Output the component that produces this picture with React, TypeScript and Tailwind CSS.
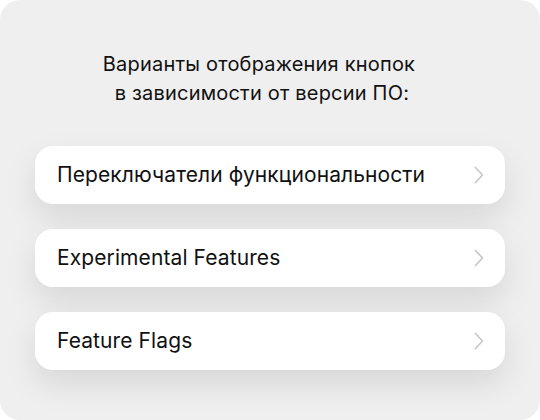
import React from 'react'

const items = ['Переключатели функциональности', 'Experimental Features', 'Feature Flags']

const Chevron = () => (
    <svg width="12" height="18" viewBox="0 0 12 18" fill="none" className="shrink-0">
        <path d="M2.5 1.5L9.5 9L2.5 16.5" stroke="#c9c9c9" strokeWidth="1.8" strokeLinecap="round" strokeLinejoin="round" />
    </svg>
)

const App = () => {
    return (
        <div className="w-[540px] h-[420px] bg-white" style={{ fontFamily: 'Inter, "Noto Sans", sans-serif' }}>
            <div className="w-full h-full rounded-[20px] bg-[#efefef] px-[35px] pt-[50px] flex flex-col">
                {/* Title */}
                <p className="pr-[22px] text-center text-[20px] leading-[29px] text-[#111] whitespace-pre tracking-[0.2px]">
                    {'Варианты отображения кнопок\n в зависимости от версии ПО:'}
                </p>

                {/* Buttons */}
                <div className="mt-[38px] flex flex-col gap-[25px]">
                    {items.map((label) => (
                        <div
                            key={label}
                            className="h-[58px] w-[470px] rounded-[18px] bg-white flex items-center justify-between pl-[22px] pr-[20px] shadow-[0_14px_32px_rgba(0,0,0,0.10)]"
                        >
                            <span className="text-[21px] text-[#111] tracking-[0.1px]">{label}</span>
                            <Chevron />
                        </div>
                    ))}
                </div>
            </div>
        </div>
    )
}

export default App
